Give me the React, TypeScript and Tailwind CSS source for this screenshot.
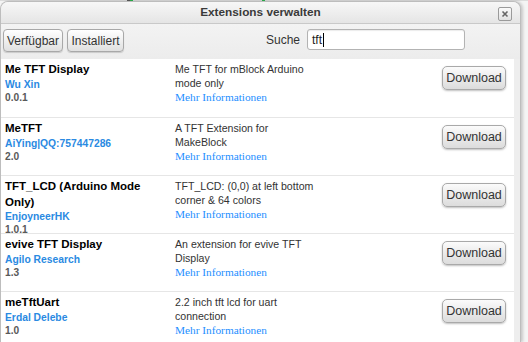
import React from 'react';

interface Extension {
  name: string;
  author: string;
  version: string;
  description: string;
}

const extensions: Extension[] = [
  { name: 'Me TFT Display', author: 'Wu Xin', version: '0.0.1', description: 'Me TFT for mBlock Arduino mode only' },
  { name: 'MeTFT', author: 'AiYing|QQ:757447286', version: '2.0', description: 'A TFT Extension for MakeBlock' },
  { name: 'TFT_LCD (Arduino Mode Only)', author: 'EnjoyneerHK', version: '1.0.1', description: 'TFT_LCD: (0,0) at left bottom corner & 64 colors' },
  { name: 'evive TFT Display', author: 'Agilo Research', version: '1.3', description: 'An extension for evive TFT Display' },
  { name: 'meTftUart', author: 'Erdal Delebe', version: '1.0', description: '2.2 inch tft lcd for uart connection' },
];

const sans = { fontFamily: '"Liberation Sans", Arial, sans-serif' };

const ExtensionRow: React.FC<{ ext: Extension; first: boolean }> = ({ ext, first }) => (
  <div
    className={`flex h-[58px] shrink-0 overflow-visible ${first ? '' : 'border-t border-[#e6e6e6]'}`}
  >
    <div className="w-[174px] shrink-0 pl-[4px] pr-[8px] pt-[3px]">
      <div className="text-[11.5px] font-bold leading-[15.5px] text-black">{ext.name}</div>
      <div className="text-[10.3px] font-bold leading-[13px] text-[#2a8ae2]">{ext.author}</div>
      <div className="text-[10.2px] font-bold leading-[13px] text-[#595959]">{ext.version}</div>
    </div>
    <div className="w-[146px] shrink-0 pt-[3px]">
      <div className="text-[10.6px] leading-[14px] text-[#333]">{ext.description}</div>
      <div
        className="text-[11.3px] leading-[14px] text-[#1e8fff]"
        style={{ fontFamily: '"Liberation Serif", "Times New Roman", serif' }}
      >
        Mehr Informationen
      </div>
    </div>
    <div className="flex-1" />
    <div className="pt-[6px] pr-[8px]">
      <button className="h-[24px] w-[64px] rounded-[5px] border border-[#a9a9a9] bg-gradient-to-b from-[#fbfbfb] to-[#dcdcdc] text-[12.5px] text-[#333] shadow-[0_1px_2px_rgba(0,0,0,0.25)]">
        Download
      </button>
    </div>
  </div>
);

export default function App() {
  return (
    <div className="relative h-[342px] w-[528px] overflow-hidden bg-[#f4f4f4]" style={sans}>
      <div className="flex h-[1px] w-full bg-[#dcdcdc]">
        <div className="ml-[127px] w-[3px] bg-[#555]" />
        <div className="w-[3px] bg-[#2aa84a]" />
        <div className="ml-[129px] w-[3px] bg-[#2aa84a]" />
      </div>
      <div className="flex h-[341px] w-[521px] flex-col overflow-hidden rounded-t-[8px] border-x border-t border-[#bdbdbd] bg-[#eeeeee] shadow-[2px_0_3px_rgba(0,0,0,0.18)]">
        {/* Title bar */}
        <div className="relative flex h-[22px] shrink-0 items-center justify-center border-b border-[#c9c9c9] bg-gradient-to-b from-[#f7f7f7] to-[#e5e5e5]">
          <span className="text-[11.8px] font-bold text-[#3a3a3a]">Extensions verwalten</span>
          <button className="absolute right-[8px] top-[5px] flex h-[14px] w-[14px] items-center justify-center rounded-[2px] border border-[#9a9a9a] bg-gradient-to-b from-[#fafafa] to-[#e2e2e2]">
            <svg width="8" height="8" viewBox="0 0 8 8">
              <path d="M1.5 1.5 L6.5 6.5 M6.5 1.5 L1.5 6.5" stroke="#666" strokeWidth="1.6" />
            </svg>
          </button>
        </div>

        {/* Toolbar */}
        <div className="flex h-[35px] shrink-0 items-start bg-gradient-to-b from-[#f3f3f3] to-[#ececec] pl-[2px] pt-[5px]">
          <button className="h-[23px] w-[60px] rounded-[4px] border border-[#a8a8a8] bg-gradient-to-b from-[#ffffff] to-[#e0e0e0] text-[12px] text-[#333] shadow-[0_1px_1px_rgba(0,0,0,0.15)]">
            Verfügbar
          </button>
          <button className="ml-[4px] h-[23px] w-[57px] rounded-[4px] border border-[#a8a8a8] bg-gradient-to-b from-[#ffffff] to-[#e0e0e0] text-[12px] text-[#333] shadow-[0_1px_1px_rgba(0,0,0,0.15)]">
            Installiert
          </button>
          <span className="ml-[142px] mt-[3px] text-[12px] leading-[16px] text-[#333]">Suche</span>
          <div className="ml-[7px] flex h-[21px] w-[158px] items-center rounded-[3px] border border-[#b3b3b3] bg-white pl-[4px] shadow-[inset_0_1px_1px_rgba(0,0,0,0.08)]">
            <span className="text-[12px] text-[#222]">tft</span>
            <span className="ml-[1px] h-[14px] w-[1px] bg-black" />
          </div>
        </div>

        {/* List */}
        <div className="flex w-[513px] flex-1 flex-col bg-white">
          {extensions.map((ext, i) => (
            <ExtensionRow key={ext.name} ext={ext} first={i === 0} />
          ))}
        </div>
      </div>
    </div>
  );
}
